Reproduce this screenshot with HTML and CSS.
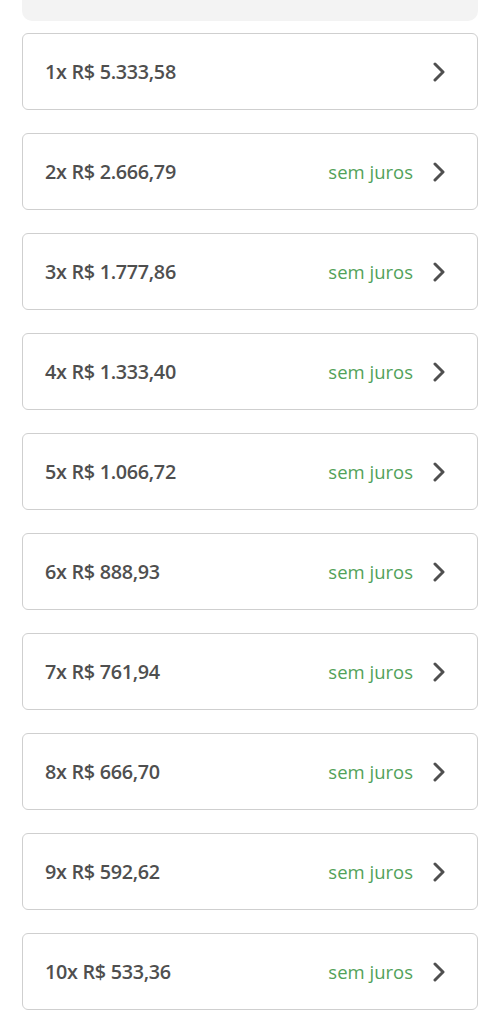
FILE: index.html
```html
<!DOCTYPE html>
<html lang="pt-BR">
<head>
<meta charset="utf-8">
<link rel="stylesheet" href="styles.css">
</head>
<body>
<div class="page">
  <div class="top-box"></div>
  <ul class="options">
    <li class="option"><span class="amount">1x R$ 5.333,58</span><span class="right"><svg class="chev" viewBox="0 0 12 20"><path d="M2 2 L10 10 L2 18"/></svg></span></li>
    <li class="option"><span class="amount">2x R$ 2.666,79</span><span class="right"><span class="tag">sem juros</span><svg class="chev" viewBox="0 0 12 20"><path d="M2 2 L10 10 L2 18"/></svg></span></li>
    <li class="option"><span class="amount">3x R$ 1.777,86</span><span class="right"><span class="tag">sem juros</span><svg class="chev" viewBox="0 0 12 20"><path d="M2 2 L10 10 L2 18"/></svg></span></li>
    <li class="option"><span class="amount">4x R$ 1.333,40</span><span class="right"><span class="tag">sem juros</span><svg class="chev" viewBox="0 0 12 20"><path d="M2 2 L10 10 L2 18"/></svg></span></li>
    <li class="option"><span class="amount">5x R$ 1.066,72</span><span class="right"><span class="tag">sem juros</span><svg class="chev" viewBox="0 0 12 20"><path d="M2 2 L10 10 L2 18"/></svg></span></li>
    <li class="option"><span class="amount">6x R$ 888,93</span><span class="right"><span class="tag">sem juros</span><svg class="chev" viewBox="0 0 12 20"><path d="M2 2 L10 10 L2 18"/></svg></span></li>
    <li class="option"><span class="amount">7x R$ 761,94</span><span class="right"><span class="tag">sem juros</span><svg class="chev" viewBox="0 0 12 20"><path d="M2 2 L10 10 L2 18"/></svg></span></li>
    <li class="option"><span class="amount">8x R$ 666,70</span><span class="right"><span class="tag">sem juros</span><svg class="chev" viewBox="0 0 12 20"><path d="M2 2 L10 10 L2 18"/></svg></span></li>
    <li class="option"><span class="amount">9x R$ 592,62</span><span class="right"><span class="tag">sem juros</span><svg class="chev" viewBox="0 0 12 20"><path d="M2 2 L10 10 L2 18"/></svg></span></li>
    <li class="option"><span class="amount">10x R$ 533,36</span><span class="right"><span class="tag">sem juros</span><svg class="chev" viewBox="0 0 12 20"><path d="M2 2 L10 10 L2 18"/></svg></span></li>
  </ul>
</div>
</body>
</html>
```
FILE: styles.css
```css
* { box-sizing: border-box; }
html, body { margin: 0; padding: 0; background: #fff; }
body { font-family: "Open Sans", Lato, "Liberation Sans", sans-serif; color: #4a4a4a; }
.page { padding: 0 22px; }
.top-box { height: 21px; background: #f3f3f3; border-radius: 0 0 10px 10px; }
.options { list-style: none; margin: 12px 0 0; padding: 0; display: flex; flex-direction: column; gap: 23px; }
.option { height: 77px; border: 1px solid #cfcfcf; border-radius: 6px; display: flex; align-items: center; justify-content: space-between; padding: 0 32px 0 22px; }
.amount { font-size: 19.8px; font-weight: 600; color: #4f4f4f; letter-spacing: -0.3px; }
.right { display: flex; align-items: center; gap: 20px; }
.tag { font-size: 18.5px; color: #52a25a; }
.chev { width: 12px; height: 20px; display: block; }
.chev path { fill: none; stroke: #4f4f4f; stroke-width: 3; stroke-linecap: round; stroke-linejoin: round; }
```
